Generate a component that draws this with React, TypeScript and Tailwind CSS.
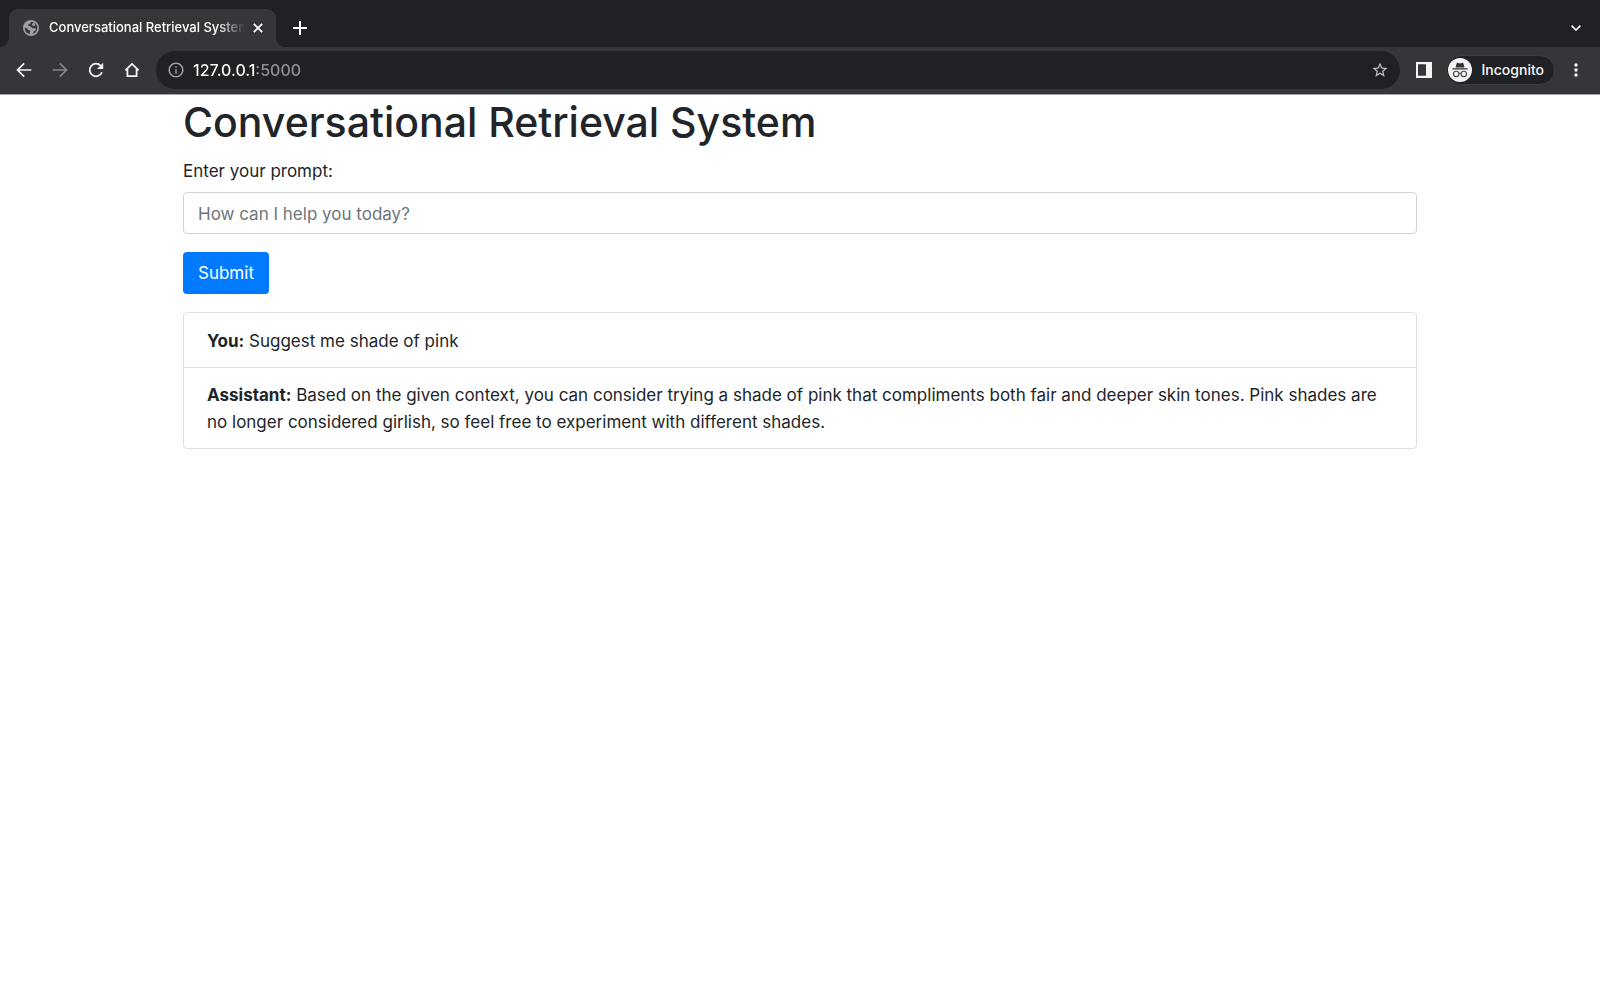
import type { ReactNode } from "react";

type IconProps = { className?: string; children: ReactNode; box?: string };

function Icon({ className, children, box = "0 0 24 24" }: IconProps) {
  return (
    <svg viewBox={box} className={className} fill="currentColor" aria-hidden="true">
      {children}
    </svg>
  );
}

function ToolButton({ label, dim, children }: { label: string; dim?: boolean; children: ReactNode }) {
  return (
    <button
      type="button"
      aria-label={label}
      className={`grid size-7 place-items-center rounded-full ${dim ? "text-[#85878a]" : "text-[#f1f3f4]"}`}
    >
      {children}
    </button>
  );
}

function TabStrip() {
  return (
    <div className="flex h-[47px] items-end bg-[#202124] pr-3 text-white">
      <div className="flex items-end">
        <Icon box="0 0 9 9" className="size-[9px] text-[#35363a]">
          <path d="M9 0v9H0A9 9 0 0 0 9 0Z" />
        </Icon>
        <div className="flex h-[38px] w-[267px] items-center rounded-t-[9px] bg-[#35363a] pr-[9px] pl-[14px]">
          <Icon box="0 0 16 16" className="size-4 shrink-0 text-[#9aa0a6]">
            <circle cx="8" cy="8" r="8" />
            <path
              fill="#35363a"
              d="M8.200 1.700C7.500 2.500 7.700 3.300 6.700 3.700c-1.200.5-1.500 1-1.300 1.800.2.900 1.300.7 2.100.9 1.200.3 1 1.400 2 1.800 1.200.4 2.600-.3 3.300.6.5.8-.1 1.600-1 1.900-1 .4-1 1.200-1.400 1.900-.3.600-.7 1-1.300 1.400A6.200 6.200 0 0 0 14.200 8 6.200 6.200 0 0 0 8.200 1.700ZM1.800 7.700a6.200 6.200 0 0 0 4.900 6.300c.3-.8-.2-1.300.3-2.100.5-.8.1-1.500-.7-1.600-1-.1-1.300-.7-1.700-1.400-.5-.9-1.600-1-2.800-1.200Z"
            />
            <path d="M9.600 3.200c1.200-.3 2.300.2 2.600 1.200.2.900-.5 1.500-1.400 1.500-1 0-1.700-.5-1.800-1.300 0-.6.100-1.200.6-1.400Z" />
          </Icon>
          <span className="ml-[10px] min-w-0 flex-1 overflow-hidden text-[13px] font-medium whitespace-nowrap [mask-image:linear-gradient(to_right,#000_86%,transparent)]">
            Conversational Retrieval System
          </span>
          <button type="button" aria-label="Close tab" className="ml-1 grid size-[18px] place-items-center">
            <svg viewBox="0 0 10 10" className="size-[10px]" fill="none" stroke="currentColor" strokeWidth="1.7" aria-hidden="true">
              <path d="M.8.8l8.400 8.400M9.200.8L.8 9.200" />
            </svg>
          </button>
        </div>
        <Icon box="0 0 9 9" className="size-[9px] text-[#35363a]">
          <path d="M0 0v9h9A9 9 0 0 1 0 0Z" />
        </Icon>
      </div>
      <button type="button" aria-label="New tab" className="mb-[5px] ml-px grid size-7 place-items-center">
        <svg viewBox="0 0 14 14" className="size-[14px]" fill="none" stroke="currentColor" strokeWidth="2" aria-hidden="true">
          <path d="M7 0v14M0 7h14" />
        </svg>
      </button>
      <button type="button" aria-label="Search tabs" className="mb-[7px] ml-auto grid size-6 place-items-center">
        <svg viewBox="0 0 10 6" className="h-[6px] w-[10px]" fill="none" stroke="currentColor" strokeWidth="1.7" aria-hidden="true">
          <path d="M.6.6L5 5 9.400.6" />
        </svg>
      </button>
    </div>
  );
}

function Toolbar() {
  return (
    <div className="flex h-[47px] items-center bg-[#35363a] pr-[10px] pb-px pl-[10px]">
      <div className="flex gap-2">
        <ToolButton label="Back">
          <svg viewBox="0 0 16 16" className="size-4" fill="none" stroke="currentColor" strokeWidth="1.700" aria-hidden="true">
            <path d="M15.300 8H2M8.200 1.300L1.500 8l6.700 6.700" />
          </svg>
        </ToolButton>
        <ToolButton label="Forward" dim>
          <svg viewBox="0 0 16 16" className="size-4" fill="none" stroke="currentColor" strokeWidth="1.700" aria-hidden="true">
            <path d="M.7 8H14M7.800 1.300L14.500 8l-6.700 6.700" />
          </svg>
        </ToolButton>
        <ToolButton label="Reload">
          <svg viewBox="0 0 16 16" className="size-4" fill="none" stroke="currentColor" strokeWidth="1.800" aria-hidden="true">
            <path d="M13.900 10.200A6.300 6.300 0 1 1 12.600 3.700L14 5.100" />
            <path d="M15.200.7v6.200H9Z" fill="currentColor" stroke="none" />
          </svg>
        </ToolButton>
        <ToolButton label="Home">
          <svg viewBox="0 0 16 16" className="size-4" fill="none" stroke="currentColor" strokeWidth="1.8" aria-hidden="true">
            <path d="M1.300 8.300L8 1.900l6.700 6.400M3.400 6.800v7.300h9.200V6.800" />
          </svg>
        </ToolButton>
      </div>
      <div className="ml-[10px] flex h-[38px] min-w-0 flex-1 items-center rounded-full bg-[#202124] pr-[10px] pl-[11px]">
        <Icon className="size-[18px] shrink-0 text-[#9aa0a6]">
          <path d="M11 7h2v2h-2zm0 4h2v6h-2zm1-9C6.480 2 2 6.480 2 12s4.480 10 10 10 10-4.480 10-10S17.520 2 12 2zm0 18c-4.410 0-8-3.590-8-8s3.590-8 8-8 8 3.590 8 8-3.590 8-8 8z" />
        </Icon>
        <input
          type="text"
          aria-label="Address"
          defaultValue="127.0.0.1:5000"
          className="ml-2 h-7 min-w-0 flex-1 bg-linear-[to_right,#ffffff_62px,#8f9296_62px] bg-clip-text text-base font-medium text-transparent outline-none"
        />
        <button type="button" aria-label="Bookmark this page" className="grid size-5 place-items-center text-[#c4c7c9]">
          <Icon className="size-[18px]">
            <path d="M22 9.240l-7.190-.62L12 2 9.190 8.630 2 9.240l5.460 4.730L5.820 21 12 17.270 18.180 21l-1.630-7.030L22 9.240zM12 15.400l-3.760 2.270 1-4.280-3.320-2.880 4.380-.38L12 6.100l1.710 4.040 4.380.38-3.320 2.880 1 4.280L12 15.400z" />
          </Icon>
        </button>
      </div>
      <button type="button" aria-label="Side panel" className="ml-[10px] grid size-7 place-items-center text-[#f1f3f4]">
        <Icon box="0 0 16 16" className="size-4">
          <path fillRule="evenodd" d="M0 0h16v16H0ZM2 2.300v11.400h8V2.300Z" />
        </Icon>
      </button>
      <button
        type="button"
        className="ml-2 flex h-[30px] items-center rounded-full border border-[#3c3d41] bg-[#202124] pr-[10px] pl-px text-sm font-medium text-[#f8f9fa]"
      >
        <svg viewBox="0 0 24 24" className="size-6" aria-hidden="true">
          <circle cx="12" cy="12" r="12" fill="#f1f3f4" />
          <path fill="#303134" d="M8.700 5.300c.1-.4.5-.6.9-.5l2.400.6 2.400-.6c.4-.1.8.1.9.5l1.200 4.200h-9ZM4.500 10.300h15v1.100h-15Z" />
          <g fill="none" stroke="#4a4b4f" strokeWidth="1.100">
            <circle cx="8.200" cy="15.900" r="2.700" />
            <circle cx="15.800" cy="15.900" r="2.700" />
            <path d="M10.900 15.700q1.100-.8 2.200 0" />
          </g>
        </svg>
        <span className="ml-[10px]">Incognito</span>
      </button>
      <button type="button" aria-label="Menu" className="ml-[7px] grid size-7 place-items-center text-[#f1f3f4]">
        <Icon box="0 0 4 14" className="h-[14px] w-1">
          <circle cx="2" cy="2" r="1.700" />
          <circle cx="2" cy="7" r="1.700" />
          <circle cx="2" cy="12" r="1.700" />
        </Icon>
      </button>
    </div>
  );
}

const messages = [
  { from: "You:", text: "Suggest me shade of pink" },
  {
    from: "Assistant:",
    text: "Based on the given context, you can consider trying a shade of pink that compliments both fair and deeper skin tones. Pink shades are no longer considered girlish, so feel free to experiment with different shades.",
  },
];

export default function App() {
  return (
    <div className="min-h-screen bg-white font-['Inter','Liberation_Sans',sans-serif]">
      <header className="border-b border-[#a5a6a8]">
        <TabStrip />
        <Toolbar />
      </header>
      <main className="mx-auto max-w-[1266px] px-4 text-[17px] leading-[27px] text-[#212529]">
        <h1 className="mb-[9px] pt-px text-[41px] leading-[53px] font-medium">Conversational Retrieval System</h1>
        <form onSubmit={(e) => e.preventDefault()}>
          <label htmlFor="prompt" className="mb-[7px] block">
            Enter your prompt:
          </label>
          <input
            id="prompt"
            type="text"
            placeholder="How can I help you today?"
            className="block h-[42px] w-full rounded border border-[#ced4da] px-[14px] pt-px outline-none placeholder:text-[#6c757d]"
          />
          <button type="submit" className="mt-[18px] block h-[42px] rounded bg-[#007bff] px-[15px] pt-px text-white">
            Submit
          </button>
        </form>
        <ul className="mt-[18px] divide-y divide-[#dfdfdf] rounded border border-[#dfdfdf] pt-px">
          {messages.map((m) => (
            <li key={m.from} className="px-[23px] pt-[14px] pb-3">
              <strong className="font-bold">{m.from}</strong> {m.text}
            </li>
          ))}
        </ul>
      </main>
    </div>
  );
}
